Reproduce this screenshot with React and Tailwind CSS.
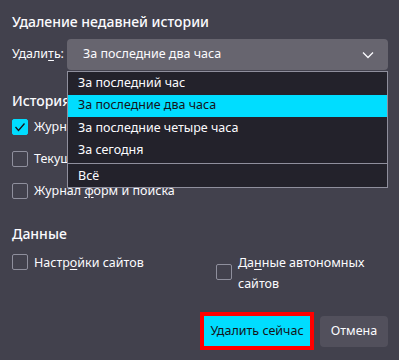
import React from 'react';

const options = [
  'За последний час',
  'За последние два часа',
  'За последние четыре часа',
  'За сегодня',
];

function Check({ checked, className = '' }) {
  return (
    <span
      className={
        'flex h-4 w-4 shrink-0 items-center justify-center rounded-[2px] border ' +
        (checked ? 'border-[#00ddff] bg-[#00ddff]' : 'border-[#8f8f9d] bg-transparent') +
        ' ' +
        className
      }
    >
      {checked && (
        <svg width="12" height="12" viewBox="0 0 12 12" fill="none">
          <polyline points="1.5,6 4.5,9.5 10.5,2.5" stroke="#15141a" strokeWidth="1.3" />
        </svg>
      )}
    </span>
  );
}

function CheckRow({ checked, children }) {
  return (
    <div className="flex h-8 items-center gap-[6px]">
      <Check checked={checked} />
      <span className="whitespace-nowrap">{children}</span>
    </div>
  );
}

export default function App() {
  return (
    <div
      className="flex h-[360px] w-[399px] flex-col bg-[#42414d] pl-3 pr-[11px] pb-[10px] pt-3 text-[12.5px] text-[#fbfbfe]"
      style={{ fontFamily: '"Noto Sans", "Open Sans", sans-serif' }}
    >
      <div className="h-5 text-[14px] font-medium leading-5">Удаление недавней истории</div>

      <div className="mt-[7px] flex items-center">
        <span className="w-[55px]">
          Удали<u className="underline-offset-2">т</u>ь:
        </span>
        <div className="relative flex-1">
          <div className="flex h-[31px] items-center justify-between rounded-[4px] bg-[#67656f] pl-4 pr-[14px]">
            <span>За последние два часа</span>
            <svg width="12" height="8" viewBox="0 0 12 8" fill="none">
              <polyline points="1,1.5 6,6.5 11,1.5" stroke="#fbfbfe" strokeWidth="1.3" />
            </svg>
          </div>
          <div className="absolute left-0 right-0 top-[32px] z-10 border border-[#8f8f9d] bg-[#23222b]">
            {options.map((o, i) => (
              <div
                key={o}
                className={
                  'flex h-[22.5px] items-center pl-[10px] ' +
                  (i === 1 ? 'bg-[#00ddff] text-[#15141a]' : '')
                }
              >
                {o}
              </div>
            ))}
            <div className="my-[1px] h-px bg-[#8f8f9d]" />
            <div className="flex h-[22px] items-center pl-[10px]">Всё</div>
          </div>
        </div>
      </div>

      <div className="mt-[21px] h-5 text-[14px] font-medium leading-5">История</div>
      <div className="flex flex-col">
        <CheckRow checked>Журнал посещений и загрузок</CheckRow>
        <CheckRow>Текущие сеансы</CheckRow>
        <CheckRow>
          Журнал <u className="underline-offset-2">ф</u>орм и поиска
        </CheckRow>
      </div>

      <div className="mt-[17px] h-5 text-[14px] font-medium leading-5">Данные</div>
      <div className="mt-2 flex leading-[21px]">
        <div className="flex w-[204px] items-start gap-[6px]">
          <Check className="mt-[2px]" />
          <span>
            Настр<u className="underline-offset-2">о</u>йки сайтов
          </span>
        </div>
        <div className="flex flex-1 items-center gap-[6px]">
          <Check className="mt-[-3px]" />
          <span className="w-[140px]">
            Да<u className="underline-offset-2">н</u>ные автономных сайтов
          </span>
        </div>
      </div>

      <div className="mt-auto flex items-center justify-end gap-[6px]">
        <button className="h-[38px] w-[114px] border-4 border-[#ff0000] bg-[#00ddff] text-[#15141a]">
          Удалить сейчас
        </button>
        <button className="h-[31px] w-[68px] rounded-[4px] bg-[#52505c] text-[#fbfbfe]">
          Отмена
        </button>
      </div>
    </div>
  );
}
